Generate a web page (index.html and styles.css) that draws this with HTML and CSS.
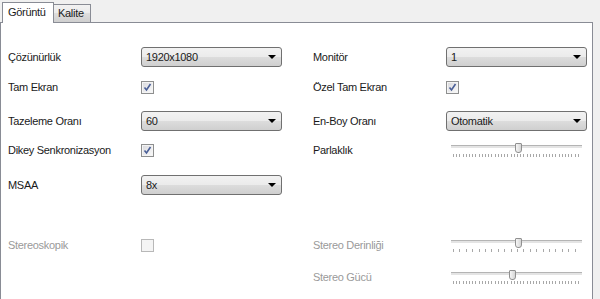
FILE: index.html
```html
<!DOCTYPE html>
<html lang="tr">

<head>
    <meta charset="UTF-8">
    <title>Ayarlar</title>
    <link rel="stylesheet" href="styles.css">
</head>

<body>
    <div class="sekmeler">
        <div class="sekme aktif">Görüntü</div>
        <div class="sekme">Kalite</div>
    </div>
    <div class="panel">
        <div class="form">
            <!-- satir 1 -->
            <div class="etiket">Çözünürlük</div>
            <div class="secim"><span>1920x1080</span><i class="ok"></i></div>
            <div class="etiket">Monitör</div>
            <div class="secim"><span>1</span><i class="ok"></i></div>

            <!-- satir 2 -->
            <div class="etiket">Tam Ekran</div>
            <div><div class="kutu"><svg width="11" height="11" viewBox="0 0 11 11"><path d="M2.5 5.5 L4.5 8 L8.5 2" /></svg></div></div>
            <div class="etiket">Özel Tam Ekran</div>
            <div><div class="kutu"><svg width="11" height="11" viewBox="0 0 11 11"><path d="M2.5 5.5 L4.5 8 L8.5 2" /></svg></div></div>

            <!-- satir 3 -->
            <div class="etiket">Tazeleme Oranı</div>
            <div class="secim"><span>60</span><i class="ok"></i></div>
            <div class="etiket">En-Boy Oranı</div>
            <div class="secim"><span>Otomatik</span><i class="ok"></i></div>

            <!-- satir 4 -->
            <div class="etiket">Dikey Senkronizasyon</div>
            <div><div class="kutu"><svg width="11" height="11" viewBox="0 0 11 11"><path d="M2.5 5.5 L4.5 8 L8.5 2" /></svg></div></div>
            <div class="etiket">Parlaklık</div>
            <div class="kaydirici sik"><div class="tutamac" style="left: 51%"></div></div>

            <!-- satir 5 -->
            <div class="etiket">MSAA</div>
            <div class="secim"><span>8x</span><i class="ok"></i></div>
            <div></div>
            <div></div>

            <!-- bos satir -->
            <div class="bosluk"></div>

            <!-- satir 6 -->
            <div class="etiket pasif">Stereoskopik</div>
            <div><div class="kutu pasifkutu"></div></div>
            <div class="etiket pasif">Stereo Derinliği</div>
            <div class="kaydirici seyrek"><div class="tutamac" style="left: 51%"></div></div>

            <!-- satir 7 -->
            <div></div>
            <div></div>
            <div class="etiket pasif">Stereo Gücü</div>
            <div class="kaydirici sik"><div class="tutamac" style="left: 46.5%"></div></div>
        </div>
    </div>
</body>

</html>
```

FILE: styles.css
```css
body {
    margin: 0;
    background-color: #f0f0f0;
    font-family: "Liberation Sans", Arial, sans-serif;
    font-size: 11px;
    letter-spacing: -0.3px;
    color: #1a1a1a;
    height: 299px;
    overflow: hidden;
}

.sekmeler {
    display: flex;
    align-items: flex-end;
    height: 22px;
    padding-left: 2px;
}

.sekme {
    height: 17px;
    padding: 0 6px 0 4px;
    line-height: 17px;
    border: 1px solid #898c95;
    border-bottom: 0;
    border-left: 0;
    background: linear-gradient(#f2f2f2, #ebebeb 50%, #dddddd 50%, #cfcfcf);
}

.sekme.aktif {
    height: 20px;
    line-height: 19px;
    padding: 0 7px 0 5px;
    border-left: 1px solid #898c95;
    background: #ffffff;
    margin-bottom: -1px;
    position: relative;
    z-index: 1;
    width: 38px;
}

.panel {
    width: 591px;
    height: 276px;
    background-color: #ffffff;
    border: 1px solid #898c95;
    border-bottom: 0;
}

.form {
    display: grid;
    grid-template-columns: 133px 172px 133px 141px;
    grid-template-rows: 30px 30px 38px 20px 50px 19px 32px 32px;
    align-items: center;
    padding: 19px 0 0 7px;
}

.bosluk {
    grid-column: 1 / 5;
}

.etiket {
    white-space: nowrap;
}

.pasif {
    color: #9a9a9a;
}

.secim {
    width: 139px;
    height: 18px;
    border: 1px solid #707070;
    border-radius: 3px;
    background: linear-gradient(#f2f2f2, #ebebeb 50%, #dddddd 50%, #cfcfcf);
    display: flex;
    align-items: center;
    justify-content: space-between;
}

.secim span {
    padding-left: 4px;
}

.ok {
    width: 0;
    height: 0;
    border-left: 4px solid transparent;
    border-right: 4px solid transparent;
    border-top: 4px solid #000000;
    margin-right: 5px;
}

.kutu {
    width: 11px;
    height: 11px;
    border: 1px solid #8e8f8f;
    background: linear-gradient(135deg, #d8d8dc, #fbfbfb);
    box-shadow: inset 0 0 0 1px #f4f4f4;
}

.kutu svg {
    display: block;
}

.kutu path {
    fill: none;
    stroke: #4a5f97;
    stroke-width: 1.6;
}

.pasifkutu {
    border-color: #b8b8b8;
    background: #f4f4f4;
}

.kaydirici {
    position: relative;
    width: 131px;
    height: 14px;
    margin-left: 5px;
}

.kaydirici::before {
    content: "";
    position: absolute;
    left: 0;
    right: 0;
    top: 2px;
    height: 2px;
    background-color: #e4e4e4;
    border-top: 1px solid #b4b4b4;
}

.kaydirici::after {
    content: "";
    position: absolute;
    left: 2px;
    right: 1px;
    bottom: 0;
    height: 3px;
}

.sik::after {
    background: repeating-linear-gradient(90deg, #a8a8a8 0 1px, transparent 1px 3.2px);
}

.seyrek::after {
    background: repeating-linear-gradient(90deg, #a8a8a8 0 1px, transparent 1px 6.4px);
}

.tutamac {
    position: absolute;
    top: 0;
    width: 5px;
    height: 8px;
    margin-left: -3px;
    border: 1px solid #909090;
    border-radius: 1px 1px 3px 3px;
    background: linear-gradient(90deg, #f6f6f6, #d6d6d6);
    z-index: 1;
}
```
